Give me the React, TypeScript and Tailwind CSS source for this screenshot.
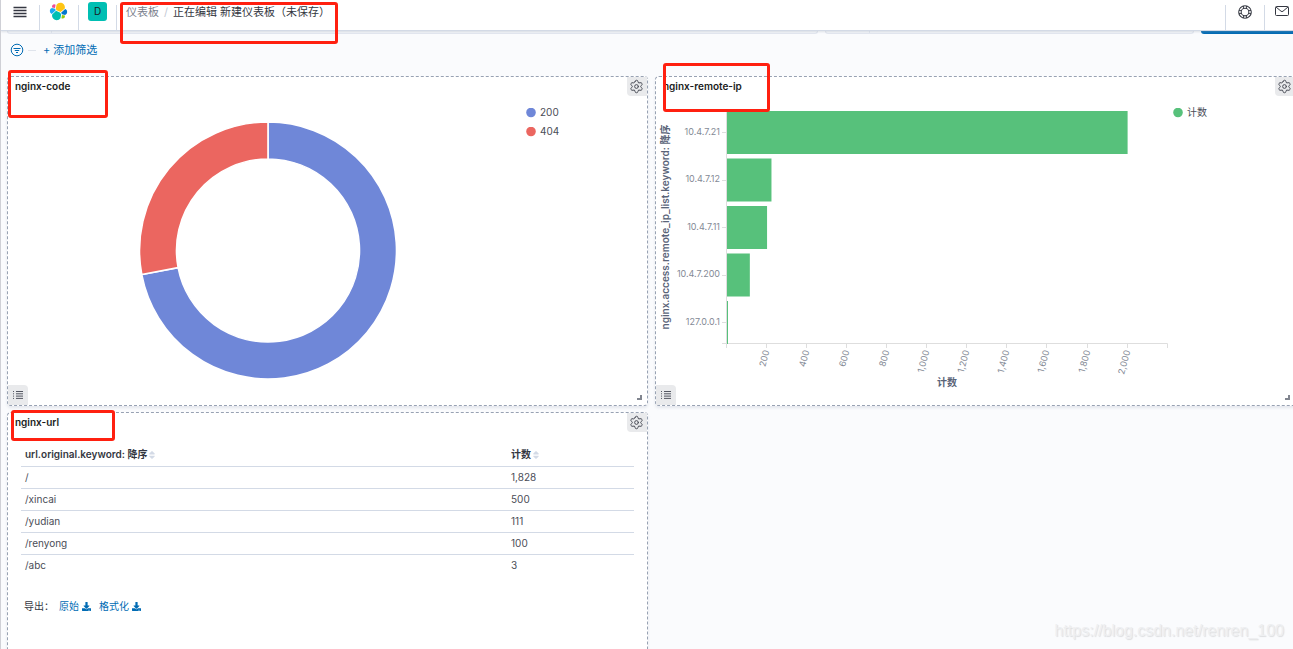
import React from 'react';
import { Settings } from 'lucide-react';
import { FaDownload, FaSort } from 'react-icons/fa';

const statusCodes = [
  { label: '200', share: 0.72, color: '#6f87d8' },
  { label: '404', share: 0.28, color: '#eb6660' },
];

const remoteIps = [
  { ip: '10.4.7.21', count: 2000 },
  { ip: '10.4.7.12', count: 222 },
  { ip: '10.4.7.11', count: 200 },
  { ip: '10.4.7.200', count: 114 },
  { ip: '127.0.0.1', count: 3 },
];

const urls = [
  { url: '/', count: '1,828' },
  { url: '/xincai', count: '500' },
  { url: '/yudian', count: '111' },
  { url: '/renyong', count: '100' },
  { url: '/abc', count: '3' },
];

function ElasticLogo() {
  return (
    <svg viewBox="0 0 32 32" className="size-[19px]" aria-hidden="true">
      <path fill="#FEC514" d="M12.58 13.787l7.002 3.211 7.066-6.213a7.849 7.849 0 00.152-1.557c0-4.287-3.464-7.777-7.73-7.777a7.69 7.69 0 00-6.36 3.379l-1.176 6.119 1.046 2.838z" />
      <path fill="#00BFB3" d="M5.333 21.228A8.01 8.01 0 005.18 22.8c0 4.301 3.472 7.8 7.754 7.8a7.72 7.72 0 006.407-3.42l1.166-6.097-1.556-2.988-7.03-3.214-6.588 6.347z" />
      <path fill="#F04E98" d="M5.288 9.067l4.8 1.137L11.14 4.73a3.785 3.785 0 00-6.05 3.018c0 .452.079.89.198 1.319z" />
      <path fill="#1BA9F5" d="M4.872 10.214a5.294 5.294 0 00-3.54 4.996 5.28 5.28 0 003.38 4.94l6.736-6.123-1.237-2.656-5.339-1.157z" />
      <path fill="#93C90E" d="M20.873 27.184a3.725 3.725 0 002.265.776 3.79 3.79 0 003.776-3.796c0-.46-.078-.898-.197-1.307l-4.796-1.127-1.048 5.454z" />
      <path fill="#0077CC" d="M21.848 20.563l5.28 1.238a5.294 5.294 0 003.54-4.996 5.28 5.28 0 00-3.38-4.931l-6.906 6.083 1.466 2.606z" />
    </svg>
  );
}

function HelpIcon() {
  return (
    <svg viewBox="0 0 16 16" className="size-[14px]" fill="none" stroke="#343741" aria-hidden="true">
      <circle cx="8" cy="8" r="7.2" strokeWidth="1.2" />
      <circle cx="8" cy="8" r="4.4" strokeWidth="1.2" />
      <path d="M6.3 1v3M9.7 1v3M6.3 12v3M9.7 12v3M1 6.3h3M1 9.7h3M12 6.3h3M12 9.7h3" />
    </svg>
  );
}

function MailIcon() {
  return (
    <svg viewBox="0 0 14 12" className="h-3 w-[14px]" fill="none" stroke="#343741" aria-hidden="true">
      <rect x="0.5" y="1.5" width="13" height="9" rx="1" />
      <path d="M1 2l5 4.2q1 .8 2 0L13 2" />
    </svg>
  );
}

function FilterIcon() {
  return (
    <svg viewBox="0 0 14 14" className="size-[14px]" fill="none" stroke="#006bb4" aria-hidden="true">
      <circle cx="7" cy="7" r="5.8" />
      <path d="M3.5 5.5h7M4.8 7.5h4.4M6 9.5h2" />
    </svg>
  );
}

function ListIcon() {
  return (
    <svg viewBox="0 0 10 8" className="h-2 w-[10px]" stroke="#535661" aria-hidden="true">
      <path d="M0 .5h1M0 2.8h1M0 5.1h1M0 7.4h1M3 .5h7M3 2.8h7M3 5.1h7M3 7.4h7" />
    </svg>
  );
}

function Highlight({ className }: { className: string }) {
  return (
    <div
      aria-hidden="true"
      className={`pointer-events-none absolute z-20 rounded-[3px] border-3 border-[#ff2010] ${className}`}
    />
  );
}

function Panel({
  title,
  highlight,
  inspect = true,
  children,
}: {
  title: string;
  highlight: string;
  inspect?: boolean;
  children: React.ReactNode;
}) {
  return (
    <section className="relative flex flex-col rounded-sm border border-dashed border-[#98a2b3] bg-white shadow-[0_2px_3px_rgba(152,162,179,0.2)]">
      <header className="flex h-[19px] items-start justify-between pl-[7px]">
        <h2 className="text-[10px] leading-[19px] font-semibold text-[#1a1c21]">{title}</h2>
        <button
          type="button"
          aria-label="面板选项"
          className="flex h-[19px] w-5 items-center justify-center rounded-bl-sm bg-[#e9eaec] pr-px"
        >
          <Settings size={15} strokeWidth={1.6} color="#4a4d57" />
        </button>
      </header>
      {children}
      {inspect && (
        <>
          <button
            type="button"
            aria-label="切换图例"
            className="absolute bottom-0 left-0 flex size-5 items-center justify-center rounded-tr-sm bg-[#e9eaec]"
          >
            <ListIcon />
          </button>
          <span className="absolute right-[5px] bottom-[5px] size-[5px] border-r-2 border-b-2 border-[#81858f]" />
        </>
      )}
      <Highlight className={highlight} />
    </section>
  );
}

function Legend({ items, className }: { items: { label: string; color: string }[]; className: string }) {
  return (
    <ul className={`flex flex-col pt-[7px] ${className}`}>
      {items.map((item) => (
        <li key={item.label} className="flex h-[19px] items-center gap-1 text-[10px] text-[#4a4d57]">
          <svg viewBox="0 0 10 10" className="size-[10px]" aria-hidden="true">
            <circle cx="5" cy="4.5" r="4.8" fill={item.color} />
          </svg>
          {item.label}
        </li>
      ))}
    </ul>
  );
}

function Donut() {
  const center = 130;
  const outer = 128.5;
  const inner = 91.5;
  const point = (turn: number, radius: number) => {
    const angle = turn * 2 * Math.PI;
    return `${center + radius * Math.sin(angle)} ${center + 0.5 - radius * Math.cos(angle)}`;
  };
  let start = 0;
  return (
    <svg viewBox="0 0 260 260" className="size-[260px]" role="img" aria-label="nginx-code">
      {statusCodes.map((slice) => {
        const from = start;
        const to = start + slice.share;
        start = to;
        const large = slice.share > 0.5 ? 1 : 0;
        return (
          <path
            key={slice.label}
            fill={slice.color}
            stroke="#fff"
            strokeWidth="1.6"
            d={`M${point(from, outer)}A${outer} ${outer} 0 ${large} 1 ${point(to, outer)}L${point(to, inner)}A${inner} ${inner} 0 ${large} 0 ${point(from, inner)}Z`}
          />
        );
      })}
    </svg>
  );
}

function BarChart() {
  const left = 71;
  const base = 247.5;
  const band = 47.5;
  const perUnit = 0.2003;
  const ticks = [200, 400, 600, 800, 1000, 1200, 1400, 1600, 1800, 2000];
  return (
    <svg viewBox="0 0 516 296" className="h-[296px] w-[516px]" role="img" aria-label="nginx-remote-ip">
      <text
        transform="translate(13 131) rotate(-90)"
        textAnchor="middle"
        className="fill-[#5a6478] text-[10px] font-semibold"
      >
        nginx.access.remote_ip_list.keyword: 降序
      </text>
      <path d={`M${left - 0.5} 15V252M66 ${base}H511.5V252`} fill="none" stroke="#dedede" />
      {remoteIps.map((row, index) => {
        const middle = 36.5 + index * band;
        return (
          <g key={row.ip}>
            <path d={`M66 ${Math.floor(middle) + 0.5}H70`} stroke="#dedede" />
            <rect
              x={left}
              y={middle - 21.5}
              width={Math.max(1, row.count * perUnit)}
              height="43"
              fill="#57c17b"
            />
            <text x="64" y={middle + 2} textAnchor="end" className="fill-[#848a96] text-[9px]">
              {row.ip}
            </text>
          </g>
        );
      })}
      {ticks.map((tick) => {
        const x = Math.round(left + tick * perUnit) - 0.5;
        return (
          <g key={tick}>
            <path d={`M${x} 248V252`} stroke="#dedede" />
            <text
              transform={`translate(${x + 3} 255) rotate(-75)`}
              textAnchor="end"
              className="fill-[#848a96] text-[9px]"
            >
              {tick.toLocaleString('en-US')}
            </text>
          </g>
        );
      })}
      <text x="291" y="290" textAnchor="middle" className="fill-[#5a6478] text-[10px] font-semibold">
        计数
      </text>
    </svg>
  );
}

function UrlTable() {
  return (
    <div className="flex flex-col pt-3 pr-[13px] pl-[13px]">
      <table className="w-full table-fixed border-collapse text-left text-[10px] text-[#4a4d57]">
        <thead>
          <tr className="h-[22px] border-b border-[#d3dae6] text-[#343741]">
            <th scope="col" className="w-[486px] py-0 pl-1 font-semibold">
              <span className="flex items-center">
                url.original.keyword: 降序
                <FaSort size={10} color="#d3dae6" />
              </span>
            </th>
            <th scope="col" className="py-0 pl-1 font-semibold">
              <span className="flex items-center">
                计数
                <FaSort size={10} color="#d3dae6" />
              </span>
            </th>
          </tr>
        </thead>
        <tbody>
          {urls.map((row) => (
            <tr key={row.url} className="h-[22px] border-b border-[#d3dae6] last:border-b-0">
              <td className="py-0 pl-1">{row.url}</td>
              <td className="py-0 pl-1">{row.count}</td>
            </tr>
          ))}
        </tbody>
      </table>
      <div className="flex items-center gap-2 pt-[23px] pl-[3px] text-[10px] leading-[15px] text-[#343741]">
        <span className="w-[27px] whitespace-nowrap">导出：</span>
        <a href="#raw" className="flex items-center gap-[3px] text-[#006bb4]">
          原始
          <FaDownload size={9} />
        </a>
        <a href="#formatted" className="flex items-center gap-[3px] text-[#006bb4]">
          格式化
          <FaDownload size={9} />
        </a>
      </div>
    </div>
  );
}

export default function App() {
  return (
    <div className="relative flex h-screen flex-col overflow-hidden border-l border-[#cfd0d6] bg-[#fafbfd] font-['Inter','Noto_Sans_CJK_SC',sans-serif]">
      <header className="relative z-10 flex h-[31px] shrink-0 items-start border-b border-[#d3dae6] bg-white shadow-[0_1px_2px_rgba(152,162,179,0.3)]">
        <button type="button" aria-label="菜单" className="flex h-6 w-[38px] items-center justify-center">
          <svg viewBox="0 0 14 12" className="h-3 w-[14px]" stroke="#343741" strokeWidth="1.3" aria-hidden="true">
            <path d="M.5 1.5h13M.5 4.5h13M.5 7.5h13M.5 10.5h13" />
          </svg>
        </button>
        <div className="flex h-full items-end">
          <a href="#home" aria-label="Elastic" className="flex h-[25px] w-[39px] justify-center border-l border-[#d3dae6] pr-px">
            <span className="-mt-[3px]">
              <ElasticLogo />
            </span>
          </a>
        </div>
        <div className="flex h-full items-end">
          <button type="button" className="flex h-[25px] w-[39px] justify-center border-x border-[#d3dae6]">
            <span className="-mt-[3px] flex size-[19px] items-center justify-center rounded-[3px] bg-[#00bfb3] text-[10px] text-[#1a1c21]">
              D
            </span>
          </button>
        </div>
        <nav aria-label="面包屑" className="flex h-6 flex-1 items-center gap-[5px] pl-[9px] text-[11px] text-[#343741]">
          <a href="#dashboards" className="text-[#7b818d]">仪表板</a>
          <span className="text-[#c3c9d4]">/</span>
          <span>正在编辑 新建仪表板（未保存）</span>
        </nav>
        <div className="flex h-full items-end">
          <button type="button" aria-label="帮助" className="flex h-[25px] w-[39px] justify-center border-l border-[#d3dae6]">
            <HelpIcon />
          </button>
          <button type="button" aria-label="消息" className="flex h-[25px] w-[29px] justify-center border-l border-[#d3dae6] pl-[6px]">
            <MailIcon />
          </button>
        </div>
        <Highlight className="top-[2px] left-[119px] h-[42px] w-[218px]" />
      </header>

      <div className="flex h-[3px] shrink-0 pl-[6px]">
        <div className="flex w-[811px] rounded-b-sm border border-t-0 border-[#e3e7ef] bg-[#f3f5f9]">
          <span className="w-11 border-r border-[#e3e7ef]" />
        </div>
        <div className="ml-[7px] flex flex-1 rounded-b-sm border border-t-0 border-[#e3e7ef] bg-[#f3f5f9]">
          <span className="w-11 border-r border-[#e3e7ef]" />
        </div>
        <div className="ml-[7px] w-[92px] rounded-bl-sm bg-[#006bb4]" />
      </div>

      <div className="flex h-[42px] shrink-0 items-start pt-2 pl-[9px] text-[11px] leading-4 text-[#006bb4]">
        <button type="button" aria-label="筛选选项" className="flex h-4 items-center">
          <FilterIcon />
        </button>
        <span className="mt-2 ml-1 h-px w-2 bg-[#dfe4ec]" />
        <button type="button" className="ml-[7px] flex h-4 items-center gap-[3px]">
          <span>+</span>
          <span>添加筛选</span>
        </button>
      </div>

      <main className="-mr-[3px] grid shrink-0 auto-rows-[330px] grid-cols-2 gap-x-[7px] gap-y-[6px] pl-[6px]">
        <Panel title="nginx-code" highlight="-top-[7px] left-0 h-12 w-[100px]">
          <div className="flex">
            <div className="flex w-[518px] justify-center pt-6 pl-px">
              <Donut />
            </div>
            <Legend items={statusCodes} className="" />
          </div>
        </Panel>
        <Panel title="nginx-remote-ip" highlight="-top-[14px] left-[7px] h-[49px] w-[107px]">
          <div className="flex">
            <BarChart />
            <Legend items={[{ label: '计数', color: '#57c17b' }]} className="pl-px" />
          </div>
        </Panel>
        <Panel title="nginx-url" highlight="-top-[3px] left-[3px] h-[31px] w-[104px]" inspect={false}>
          <UrlTable />
        </Panel>
      </main>

      <p className="pointer-events-none absolute right-[9px] bottom-[8px] font-['Liberation_Sans',sans-serif] text-base leading-5 text-[#eeeff1] [text-shadow:1px_1px_1px_#dcdddf]">
        https://blog.csdn.net/renren_100
      </p>
    </div>
  );
}
